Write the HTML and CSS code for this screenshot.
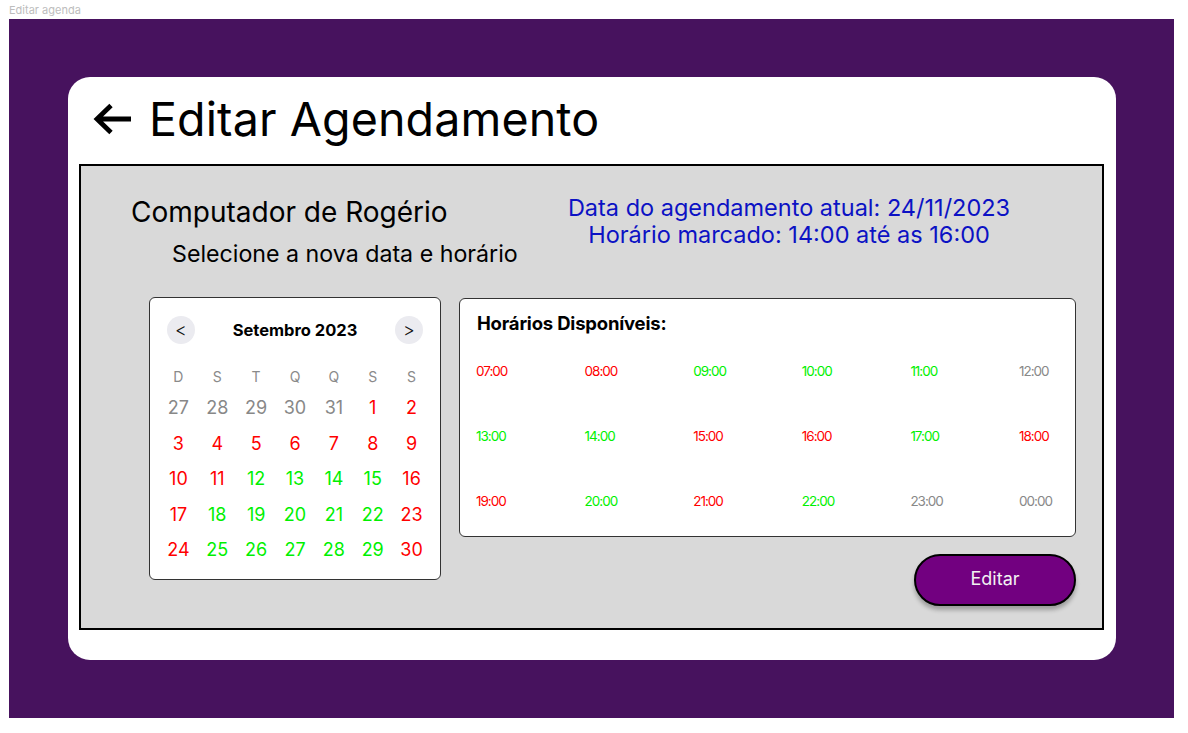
FILE: index.html
```html
<!DOCTYPE html>
<html lang="pt-BR">
<head>
<meta charset="utf-8">
<title>Editar agenda</title>
<link rel="stylesheet" href="styles.css">
</head>
<body>
<div class="frame-label">Editar agenda</div>
<div class="frame">
  <div class="card">
    <header class="header">
      <svg class="back" width="40" height="32" viewBox="0 0 40 32" aria-hidden="true">
        <path d="M4 16 H38 M18 2.5 L4 16 L18 29.5" fill="none" stroke="#000" stroke-width="4.8" stroke-linecap="butt" stroke-linejoin="miter"/>
      </svg>
      <h1 class="title">Editar Agendamento</h1>
    </header>
    <section class="panel">
      <div class="top-row">
        <div class="intro">
          <div class="device">Computador de Rogério</div>
          <div class="hint">Selecione a nova data e horário</div>
        </div>
        <div class="current">
          <div>Data do agendamento atual: 24/11/2023</div>
          <div>Horário marcado: 14:00 até as 16:00</div>
        </div>
      </div>
      <div class="bottom-row">
        <div class="calendar">
          <div class="cal-head">
            <button class="nav">&lt;</button>
            <div class="month">Setembro 2023</div>
            <button class="nav">&gt;</button>
          </div>
          <div class="weekdays">
            <span>D</span><span>S</span><span>T</span><span>Q</span><span>Q</span><span>S</span><span>S</span>
          </div>
          <div class="days">
            <span class="off">27</span><span class="off">28</span><span class="off">29</span><span class="off">30</span><span class="off">31</span><span class="no">1</span><span class="no">2</span>
            <span class="no">3</span><span class="no">4</span><span class="no">5</span><span class="no">6</span><span class="no">7</span><span class="no">8</span><span class="no">9</span>
            <span class="no">10</span><span class="no">11</span><span class="ok">12</span><span class="ok">13</span><span class="ok">14</span><span class="ok">15</span><span class="no">16</span>
            <span class="no">17</span><span class="ok">18</span><span class="ok">19</span><span class="ok">20</span><span class="ok">21</span><span class="ok">22</span><span class="no">23</span>
            <span class="no">24</span><span class="ok">25</span><span class="ok">26</span><span class="ok">27</span><span class="ok">28</span><span class="ok">29</span><span class="no">30</span>
          </div>
        </div>
        <div class="right-col">
          <div class="slots">
            <div class="slots-title">Horários Disponíveis:</div>
            <div class="slot-grid">
              <span class="no">07:00</span><span class="no">08:00</span><span class="ok">09:00</span><span class="ok">10:00</span><span class="ok">11:00</span><span class="off">12:00</span>
              <span class="ok">13:00</span><span class="ok">14:00</span><span class="no">15:00</span><span class="no">16:00</span><span class="ok">17:00</span><span class="no">18:00</span>
              <span class="no">19:00</span><span class="ok">20:00</span><span class="no">21:00</span><span class="ok">22:00</span><span class="off">23:00</span><span class="off">00:00</span>
            </div>
          </div>
          <button class="edit-btn">Editar</button>
        </div>
      </div>
    </section>
  </div>
</div>
</body>
</html>
```

FILE: styles.css
```css
* { box-sizing: border-box; }

body {
  margin: 0;
  background: #ffffff;
  font-family: Inter, "Noto Sans", "Liberation Sans", sans-serif;
  color: #000;
}

.frame-label {
  height: 19px;
  padding: 4px 0 0 9px;
  font-size: 11px;
  line-height: 13px;
  color: #bdbdbd;
}

.frame {
  margin-left: 9px;
  width: 1165px;
  height: 699px;
  background: #47125e;
  padding: 58px 0 0 59px;
}

.card {
  width: 1048px;
  height: 583px;
  background: #ffffff;
  border-radius: 22px;
  padding: 0 12px 0 11px;
}

.header {
  height: 87px;
  display: flex;
  align-items: center;
  padding: 0 0 4px 14px;
}

.back {
  display: block;
  margin-right: 16px;
}

.title {
  margin: 0;
  font-size: 46.6px;
  font-weight: 400;
  line-height: 54px;
  letter-spacing: 0.1px;
}

.panel {
  height: 466px;
  background: #d9d9d9;
  border: 2px solid #000;
  padding: 30px 26px 0 0;
}

.top-row {
  display: flex;
}

.intro {
  width: 478px;
  padding-left: 50px;
}

.device {
  font-size: 28px;
  line-height: 33px;
}

.hint {
  margin: 11px 0 0 41px;
  font-size: 23.2px;
  line-height: 28px;
}

.current {
  width: 460px;
  margin-top: -2px;
  text-align: center;
  color: #0c12c4;
  font-size: 23.5px;
  line-height: 27px;
}

.bottom-row {
  display: flex;
  gap: 18px;
  margin-top: 29px;
  padding-left: 68px;
}

.calendar {
  width: 292px;
  height: 283px;
  background: #fff;
  border: 1px solid #333;
  border-radius: 6px;
  padding: 18px 17px 0;
}

.cal-head {
  display: flex;
  align-items: center;
  justify-content: space-between;
}

.nav {
  width: 28px;
  height: 28px;
  border: 0;
  border-radius: 50%;
  background: #ebebf0;
  font-family: inherit;
  font-size: 18px;
  font-weight: 300;
  line-height: 28px;
  padding: 0;
  color: #111;
}

.month {
  font-size: 16.5px;
  font-weight: 700;
  line-height: 28px;
}

.weekdays, .days {
  display: grid;
  grid-template-columns: repeat(7, 1fr);
  margin: 0 -8px;
  text-align: center;
}

.weekdays {
  margin-top: 21px;
  font-size: 14px;
  line-height: 24px;
  color: #8a8a8a;
}

.days {
  margin-top: 1px;
  grid-auto-rows: 35.5px;
  font-size: 18px;
  line-height: 35.5px;
}

.off { color: #888888; }
.no { color: #ff0000; }
.ok { color: #00f000; }

.right-col {
  display: flex;
  flex-direction: column;
  align-items: flex-end;
  padding-top: 1px;
}

.slots {
  width: 617px;
  height: 239px;
  background: #fff;
  border: 1px solid #333;
  border-radius: 6px;
  padding: 13px 16px 0 16px;
}

.slots-title {
  padding-left: 1px;
  font-size: 18.5px;
  font-weight: 700;
  line-height: 22px;
  letter-spacing: -0.2px;
}

.slot-grid {
  display: grid;
  grid-template-columns: repeat(6, 108.6px);
  grid-auto-rows: 20px;
  row-gap: 45px;
  margin-top: 27px;
  font-size: 13.5px;
  line-height: 20px;
  letter-spacing: -1px;
}

.edit-btn {
  margin-top: 17px;
  width: 162px;
  height: 52px;
  border: 2px solid #000;
  border-radius: 26px;
  background: #720080;
  color: #f2f2f2;
  font-family: inherit;
  font-size: 18px;
  padding: 0 0 3px;
  box-shadow: 0 4px 4px rgba(0, 0, 0, 0.28);
}
```
